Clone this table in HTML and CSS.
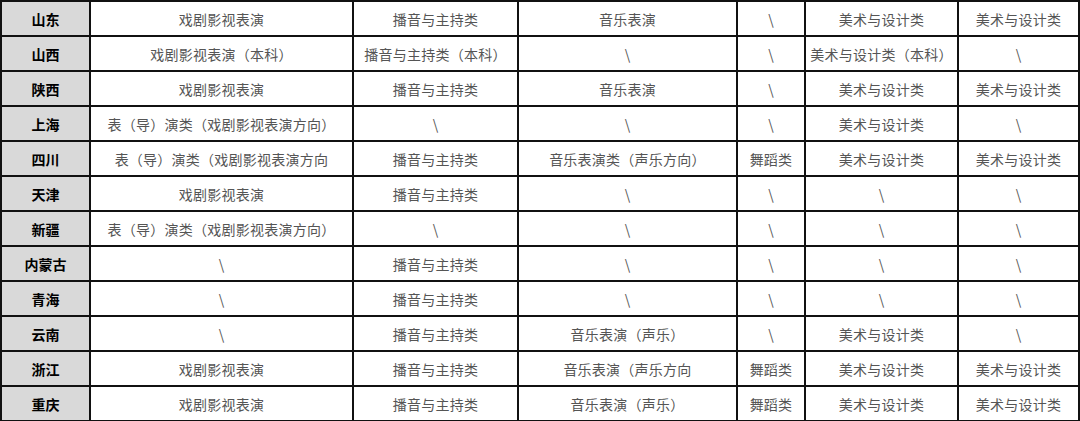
FILE: index.html
```html
<!DOCTYPE html>
<html lang="zh-CN">
<head>
<meta charset="utf-8">
<link rel="stylesheet" href="styles.css">
</head>
<body>
<table class="grid">
<colgroup>
<col class="c1"><col class="c2"><col class="c3"><col class="c4"><col class="c5"><col class="c6"><col class="c7">
</colgroup>
<tbody>
<tr><th>山东</th><td>戏剧影视表演</td><td>播音与主持类</td><td>音乐表演</td><td>\</td><td>美术与设计类</td><td>美术与设计类</td></tr>
<tr><th>山西</th><td>戏剧影视表演（本科）</td><td>播音与主持类（本科）</td><td>\</td><td>\</td><td>美术与设计类（本科）</td><td>\</td></tr>
<tr><th>陕西</th><td>戏剧影视表演</td><td>播音与主持类</td><td>音乐表演</td><td>\</td><td>美术与设计类</td><td>美术与设计类</td></tr>
<tr><th>上海</th><td>表（导）演类（戏剧影视表演方向）</td><td>\</td><td>\</td><td>\</td><td>美术与设计类</td><td>\</td></tr>
<tr><th>四川</th><td>表（导）演类（戏剧影视表演方向</td><td>播音与主持类</td><td>音乐表演类（声乐方向）</td><td>舞蹈类</td><td>美术与设计类</td><td>美术与设计类</td></tr>
<tr><th>天津</th><td>戏剧影视表演</td><td>播音与主持类</td><td>\</td><td>\</td><td>\</td><td>\</td></tr>
<tr><th>新疆</th><td>表（导）演类（戏剧影视表演方向）</td><td>\</td><td>\</td><td>\</td><td>\</td><td>\</td></tr>
<tr><th>内蒙古</th><td>\</td><td>播音与主持类</td><td>\</td><td>\</td><td>\</td><td>\</td></tr>
<tr><th>青海</th><td>\</td><td>播音与主持类</td><td>\</td><td>\</td><td>\</td><td>\</td></tr>
<tr><th>云南</th><td>\</td><td>播音与主持类</td><td>音乐表演（声乐）</td><td>\</td><td>美术与设计类</td><td>\</td></tr>
<tr><th>浙江</th><td>戏剧影视表演</td><td>播音与主持类</td><td>音乐表演（声乐方向</td><td>舞蹈类</td><td>美术与设计类</td><td>美术与设计类</td></tr>
<tr><th>重庆</th><td>戏剧影视表演</td><td>播音与主持类</td><td>音乐表演（声乐）</td><td>舞蹈类</td><td>美术与设计类</td><td>美术与设计类</td></tr>
</tbody>
</table>
</body>
</html>
```
FILE: styles.css
```css
html, body {
  margin: 0;
  padding: 0;
  background: #fff;
}
.grid {
  border-collapse: collapse;
  table-layout: fixed;
  width: 1078px;
  font-family: "Noto Sans CJK SC", "Noto Sans", sans-serif;
  font-size: 14px;
}
.c1 { width: 89px; }
.c2 { width: 263px; }
.c3 { width: 165px; }
.c4 { width: 219px; }
.c5 { width: 68px; }
.c6 { width: 153px; }
.c7 { width: 121px; }
.grid tr { height: 35px; }
.grid th, .grid td {
  border: 2px solid #111;
  text-align: center;
  vertical-align: middle;
  padding: 0;
  white-space: nowrap;
  line-height: 1;
}
.grid th {
  background: #d9d9d9;
  color: #000;
  font-weight: 700;
}
.grid td {
  color: #555;
  font-weight: 400;
  letter-spacing: 0.25px;
}
```
